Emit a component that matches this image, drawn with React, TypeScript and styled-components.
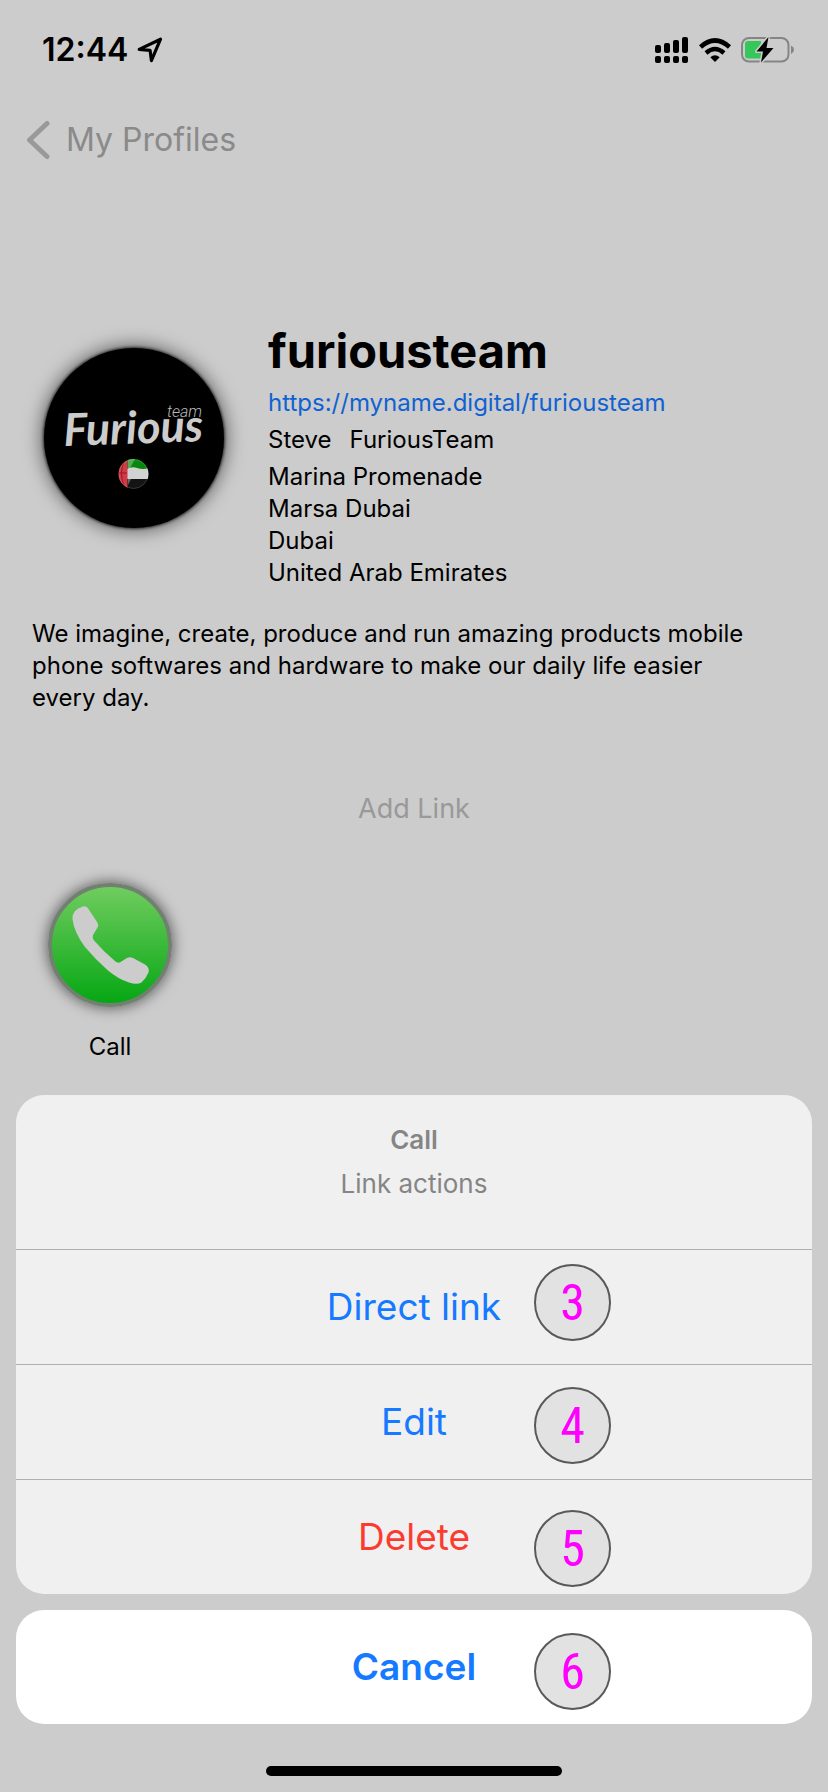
import React from "react";
import styled, { createGlobalStyle } from "styled-components";

const GlobalStyle = createGlobalStyle`
  * { box-sizing: border-box; }
  body {
    margin: 0;
    background: #ccc;
    color: #000;
    font-family: Inter, "Liberation Sans", sans-serif;
  }
  h1, h2, p { margin: 0; font-weight: 400; }
  button {
    font-family: inherit;
    border: 0;
    padding: 0;
    background: none;
    cursor: pointer;
  }
`;

const Page = styled.div`
  min-height: 100vh;
  display: flex;
  flex-direction: column;
`;

const StatusBar = styled.header`
  display: flex;
  align-items: center;
  justify-content: space-between;
  height: 100px;
  padding: 0 34px 0 42px;
`;

const StatusGroup = styled.div<{ $gap: number }>`
  display: flex;
  align-items: center;
  gap: ${(p) => p.$gap}px;
`;

const Clock = styled.time`
  font-size: 32px;
  line-height: 40px;
  font-weight: 600;
`;

const BackButton = styled.button`
  align-self: flex-start;
  display: flex;
  align-items: center;
  gap: 14px;
  margin: 20px 0 0 26px;
  font-size: 32px;
  line-height: 40px;
  color: #8a8a8a;
`;

const Profile = styled.section`
  display: flex;
  gap: 44px;
  margin-top: 162px;
  padding: 0 32px 0 44px;
`;

const Avatar = styled.div`
  flex: none;
  width: 180px;
  height: 180px;
  margin-top: 26px;
  border-radius: 50%;
  background: #000;
  box-shadow: 0 0 3px 1px rgba(0, 0, 0, 0.7), 0 0 18px 3px rgba(0, 0, 0, 0.5);
`;

const Details = styled.div`
  min-width: 0;
  font-size: 24px;
  line-height: 32px;
`;

const ProfileName = styled.h1`
  font-size: 47px;
  line-height: 58px;
  font-weight: 700;
`;

const ProfileLink = styled.a`
  display: block;
  margin-top: 7px;
  color: #1062d2;
  text-decoration: none;
`;

const PersonName = styled.p`
  display: flex;
  gap: 18px;
  margin: 5px 0;
`;

const Bio = styled.p`
  max-width: 780px;
  margin-top: 29px;
  padding: 0 32px;
  font-size: 24px;
  line-height: 32px;
`;

const AddLink = styled.button`
  align-self: center;
  margin-top: 75px;
  font-size: 27px;
  line-height: 40px;
  color: #999;
`;

const LinkGrid = styled.section`
  display: flex;
  flex-wrap: wrap;
  margin-top: 54px;
  padding: 0 48px;
`;

const LinkTile = styled.button`
  display: flex;
  flex-direction: column;
  align-items: center;
  gap: 24px;
  font-size: 24px;
  line-height: 32px;
  color: #000;
`;

const TileIcon = styled.span`
  display: block;
  width: 124px;
  height: 124px;
  border-radius: 50%;
  box-shadow: 0 0 14px 1px rgba(0, 0, 0, 0.55);
`;

const SheetArea = styled.div`
  position: relative;
  display: flex;
  flex-direction: column;
  gap: 16px;
  margin-top: auto;
  padding: 32px 16px 42px;
`;

const Sheet = styled.section<{ $solid?: boolean }>`
  overflow: hidden;
  border-radius: 28px;
  background: ${(p) => (p.$solid ? "#fff" : "#f0f0f0")};
`;

const SheetHeader = styled.div`
  height: 154px;
  padding-top: 23px;
  font-size: 26px;
  line-height: 44px;
  text-align: center;
  color: #858585;
`;

const SheetTitle = styled.h2`
  font-size: 26px;
  line-height: 44px;
  font-weight: 600;
`;

const SheetAction = styled.button<{ $danger?: boolean; $strong?: boolean }>`
  display: block;
  width: 100%;
  height: ${(p) => (p.$strong ? 114 : 115)}px;
  border-top: ${(p) => (p.$strong ? "0" : "1px solid #b0b0b0")};
  font-size: 37px;
  line-height: 48px;
  font-weight: ${(p) => (p.$strong ? 600 : 400)};
  color: ${(p) => (p.$danger ? "#fb3b30" : "#157aff")};
`;

const Markers = styled.ol`
  position: absolute;
  bottom: 56px;
  left: calc(50% + 120px);
  display: flex;
  flex-direction: column;
  gap: 46px;
  margin: 0;
  padding: 0;
  list-style: none;
  pointer-events: none;
`;

const Marker = styled.li`
  display: flex;
  align-items: center;
  justify-content: center;
  width: 77px;
  height: 77px;
  border: 2px solid #595959;
  border-radius: 50%;
  background: #e2e2e2;
  font-family: "Roboto Condensed", "Liberation Sans Narrow", Roboto, sans-serif;
  font-size: 50px;
  line-height: 60px;
  color: #f0f;
`;

const HomeIndicator = styled.div`
  flex: none;
  align-self: center;
  width: 296px;
  height: 10px;
  margin-bottom: 16px;
  border-radius: 5px;
  background: #000;
`;

const LocationIcon = () => (
  <svg width="26" height="26" viewBox="0 0 26 26" aria-hidden="true">
    <path
      d="M2.2 12.4 L23.5 2.2 L14.4 23.6 L13.1 13.4 Z"
      fill="none"
      stroke="#000"
      strokeWidth="3.2"
      strokeLinejoin="round"
    />
  </svg>
);

const SignalIcon = () => (
  <svg width="34" height="27" viewBox="0 0 34 27" aria-hidden="true">
    {[8, 6, 3, 0].map((y, i) => (
      <g key={y}>
        <rect x={i * 9} y={y} width="6" height={16 - y} rx="2" />
        <rect x={i * 9} y="19" width="6" height="7" rx="2" />
      </g>
    ))}
  </svg>
);

const WifiIcon = () => (
  <svg width="32" height="25" viewBox="0 0 32 25" aria-hidden="true">
    <path d="M1.5 9 Q16 -4 30.5 9" fill="none" stroke="#000" strokeWidth="4.6" />
    <path d="M7 15 Q16 7 25 15" fill="none" stroke="#000" strokeWidth="4.4" />
    <path d="M16 24 L11.3 19.2 Q16 15.4 20.7 19.2 Z" />
  </svg>
);

const BatteryIcon = () => (
  <svg width="53" height="28" viewBox="0 0 53 28" aria-hidden="true">
    <rect x="1" y="2" width="46.5" height="23.5" rx="7" fill="none" stroke="#858585" strokeWidth="2" />
    <path d="M50 9.5 Q53 11 53 13.8 Q53 16.5 50 18 Z" fill="#858585" />
    <path d="M7 5 H20 V22.5 H7 Q4 22.5 4 19.5 V8 Q4 5 7 5 Z" fill="#34c759" />
    <path
      d="M27.5 1 L15.5 15.5 H22 L20 26.5 L32.5 12 H25.5 Z"
      stroke="#ccc"
      strokeWidth="3"
      paintOrder="stroke"
      strokeLinejoin="round"
    />
  </svg>
);

const BackIcon = () => (
  <svg width="26" height="40" viewBox="0 0 26 40" aria-hidden="true">
    <path
      d="M21 3.5 L3.5 20 L21 36.5"
      fill="none"
      stroke="#999"
      strokeWidth="5"
      strokeLinecap="round"
      strokeLinejoin="round"
    />
  </svg>
);

const TeamLogo = () => (
  <svg width="180" height="180" viewBox="0 0 180 180" role="img" aria-label="Furious team">
    <text
      x="20"
      y="98"
      fill="#ccc"
      fontFamily="Lato, sans-serif"
      fontSize="45"
      fontStyle="italic"
      fontWeight="700"
      transform="rotate(-2 20 98)"
    >
      Furious
    </text>
    <text x="123" y="69" fill="#bbb" fontFamily="Roboto, sans-serif" fontSize="16" fontStyle="italic" fontWeight="300">
      team
    </text>
    <clipPath id="flag">
      <circle cx="89.5" cy="126" r="15" />
    </clipPath>
    <g clipPath="url(#flag)">
      <rect x="74" y="110" width="31" height="11" fill="#07870d" />
      <path d="M84 111 H91 L84 124 Z" fill="#55a957" />
      <path d="M83 121 Q88 118 93 120 Q99 122 105 120 V131 H83 Z" fill="#d2d2d2" />
      <rect x="83" y="131" width="22" height="11" fill="#141414" />
      <path d="M84 131 V137 L87 131 Z" fill="#666" />
      <rect x="74" y="110" width="9.5" height="32" fill="#cf3c48" />
      <path d="M75 125 H83 M80 113 Q75 125 80 138" stroke="#a11420" fill="none" />
    </g>
    <circle cx="89.5" cy="126" r="14.5" fill="none" stroke="#fff" strokeOpacity="0.15" />
  </svg>
);

const PhoneIcon = () => (
  <svg width="124" height="124" viewBox="0 0 124 124" aria-hidden="true">
    <defs>
      <linearGradient id="call" x1="0" y1="0" x2="0" y2="1">
        <stop offset="0" stopColor="#72cd60" />
        <stop offset="1" stopColor="#04a612" />
      </linearGradient>
    </defs>
    <circle cx="62" cy="62" r="60" fill="url(#call)" stroke="#718071" strokeWidth="4" />
    <path
      d="M35 23.5 Q38.5 22.5 40.5 26 L49 39 Q51 42 49.5 44.5 L45 52 Q44 54.5 46 57.5 Q55 68 67.5 78.5 Q70 80.5 72.5 79 L79 75 Q82 73.5 85 75 L97 81.5 Q102 85 100.5 89.5 Q98 95.5 93.5 99.5 Q89 102 81 99.5 Q70 96 60 87.5 Q47 76 37 64 Q26 49 24.5 36 Q24 26.5 35 23.5 Z"
      fill="#ccc"
    />
  </svg>
);

const actions = [
  { label: "Direct link", danger: false },
  { label: "Edit", danger: false },
  { label: "Delete", danger: true },
];

export default function App() {
  return (
    <Page>
      <GlobalStyle />
      <StatusBar>
        <StatusGroup $gap={9}>
          <Clock>12:44</Clock>
          <LocationIcon />
        </StatusGroup>
        <StatusGroup $gap={10}>
          <SignalIcon />
          <WifiIcon />
          <BatteryIcon />
        </StatusGroup>
      </StatusBar>

      <BackButton type="button">
        <BackIcon />
        My Profiles
      </BackButton>

      <Profile>
        <Avatar>
          <TeamLogo />
        </Avatar>
        <Details>
          <ProfileName>furiousteam</ProfileName>
          <ProfileLink href="https://myname.digital/furiousteam">https://myname.digital/furiousteam</ProfileLink>
          <PersonName>
            <span>Steve</span>
            <span>FuriousTeam</span>
          </PersonName>
          <p>Marina Promenade</p>
          <p>Marsa Dubai</p>
          <p>Dubai</p>
          <p>United Arab Emirates</p>
        </Details>
      </Profile>

      <Bio>
        We imagine, create, produce and run amazing products mobile phone softwares and hardware to make our daily life
        easier every day.
      </Bio>

      <AddLink type="button">Add Link</AddLink>

      <LinkGrid>
        <LinkTile type="button">
          <TileIcon>
            <PhoneIcon />
          </TileIcon>
          Call
        </LinkTile>
      </LinkGrid>

      <SheetArea>
        <Sheet>
          <SheetHeader>
            <SheetTitle>Call</SheetTitle>
            <p>Link actions</p>
          </SheetHeader>
          {actions.map((a) => (
            <SheetAction key={a.label} type="button" $danger={a.danger}>
              {a.label}
            </SheetAction>
          ))}
        </Sheet>
        <Sheet $solid>
          <SheetAction type="button" $strong>
            Cancel
          </SheetAction>
        </Sheet>
        <Markers>
          {[3, 4, 5, 6].map((n) => (
            <Marker key={n}>{n}</Marker>
          ))}
        </Markers>
      </SheetArea>
      <HomeIndicator />
    </Page>
  );
}
